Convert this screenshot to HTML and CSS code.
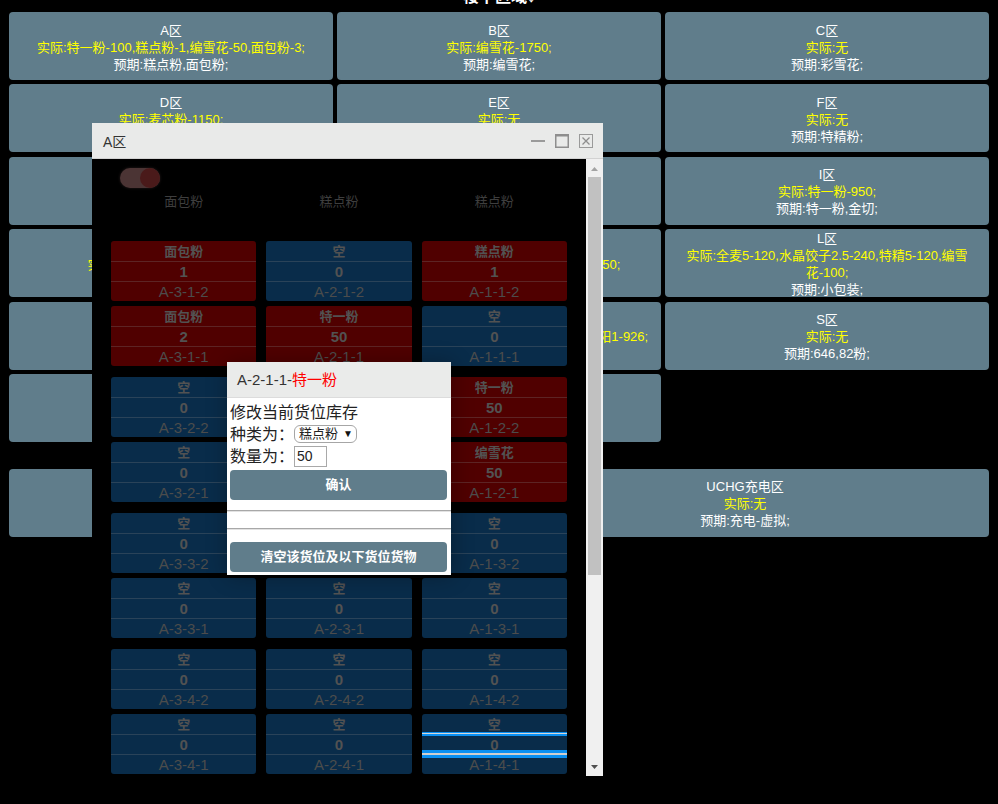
FILE: index.html
```html
<!DOCTYPE html>
<html lang="zh">
<head>
<meta charset="utf-8">
<title>楼下区域</title>
<link rel="stylesheet" href="styles.css">
</head>
<body>
<div class="page">
  <div class="sec-title">楼下区域↓</div>
  <div class="zones">
    <div class="zone"><div>A区</div><div class="act">实际:特一粉-100,糕点粉-1,编雪花-50,面包粉-3;</div><div>预期:糕点粉,面包粉;</div></div>
    <div class="zone"><div>B区</div><div class="act">实际:编雪花-1750;</div><div>预期:编雪花;</div></div>
    <div class="zone"><div>C区</div><div class="act">实际:无</div><div>预期:彩雪花;</div></div>
    <div class="zone"><div>D区</div><div class="act">实际:麦芯粉-1150;</div><div>预期:麦芯粉;</div></div>
    <div class="zone"><div>E区</div><div class="act">实际:无</div><div>预期:雪花粉;</div></div>
    <div class="zone"><div>F区</div><div class="act">实际:无</div><div>预期:特精粉;</div></div>
    <div class="zone"><div>G区</div><div class="act">实际:无</div><div>预期:麦芯粉;</div></div>
    <div class="zone"><div>H区</div><div class="act">实际:无</div><div>预期:特一粉;</div></div>
    <div class="zone"><div>I区</div><div class="act">实际:特一粉-950;</div><div>预期:特一粉,金切;</div></div>
    <div class="zone"><div>J区</div><div class="act">实际:特精粉-1000,麦芯粉-50;</div><div>预期:特精粉;</div></div>
    <div class="zone"><div>K区</div><div class="act">实际:特精粉-1200,麦芯粉-800,特一粉-350;</div><div>预期:特精粉,麦芯粉;</div></div>
    <div class="zone"><div>L区</div><div class="act">实际:全麦5-120,水晶饺子2.5-240,特精5-120,编雪花-100;</div><div>预期:小包装;</div></div>
    <div class="zone"><div>M区</div><div class="act">实际:无</div><div>预期:面包粉;</div></div>
    <div class="zone"><div>N区</div><div class="act">实际:特一粉-1200,雪花粉-300,麦芯粉-50,朝阳1-926;</div><div>预期:朝阳;</div></div>
    <div class="zone"><div>S区</div><div class="act">实际:无</div><div>预期:646,82粉;</div></div>
    <div class="zone"><div>T区</div><div class="act">实际:无</div><div>预期:糕点粉;</div></div>
    <div class="zone"><div>U区</div><div class="act">实际:无</div><div>预期:编雪花;</div></div>
  </div>
  <div class="sec-title sec2">充电区域↓</div>
  <div class="zones two">
    <div class="zone"><div>充电区</div><div class="act">实际:无</div><div>预期:充电;</div></div>
    <div class="zone"><div>UCHG充电区</div><div class="act">实际:无</div><div>预期:充电-虚拟;</div></div>
  </div>
</div>

<div class="win">
  <div class="win-bar">
    <span class="win-title">A区</span>
    <div class="win-ctrls">
      <svg width="14" height="14" viewBox="0 0 14 14"><rect x="0" y="6" width="14" height="2" fill="#9a9a9a"/></svg>
      <svg width="14" height="14" viewBox="0 0 14 14"><rect x="0.75" y="0.75" width="12.5" height="12.5" fill="none" stroke="#8e8e8e" stroke-width="1.5"/><rect x="0" y="0" width="14" height="2.5" fill="#8e8e8e"/></svg>
      <svg width="14" height="14" viewBox="0 0 14 14"><rect x="0.5" y="0.5" width="13" height="13" fill="none" stroke="#9a9a9a"/><path d="M3.5 3.5 L10.5 10.5 M10.5 3.5 L3.5 10.5" stroke="#8e8e8e" stroke-width="1.3"/></svg>
    </div>
  </div>
  <div class="win-main">
    <div class="win-body">
      <div class="toggle"><span class="knob"></span></div>
      <div class="heads"><span>面包粉</span><span>糕点粉</span><span>糕点粉</span></div>

      <div class="grp">
        <div class="cell red"><div class="nm">面包粉</div><div class="ct">1</div><div class="loc">A-3-1-2</div></div>
        <div class="cell blue"><div class="nm">空</div><div class="ct">0</div><div class="loc">A-2-1-2</div></div>
        <div class="cell red"><div class="nm">糕点粉</div><div class="ct">1</div><div class="loc">A-1-1-2</div></div>
        <div class="cell red"><div class="nm">面包粉</div><div class="ct">2</div><div class="loc">A-3-1-1</div></div>
        <div class="cell red"><div class="nm">特一粉</div><div class="ct">50</div><div class="loc">A-2-1-1</div></div>
        <div class="cell blue"><div class="nm">空</div><div class="ct">0</div><div class="loc">A-1-1-1</div></div>
      </div>
      <div class="grp">
        <div class="cell blue"><div class="nm">空</div><div class="ct">0</div><div class="loc">A-3-2-2</div></div>
        <div class="cell blue"><div class="nm">空</div><div class="ct">0</div><div class="loc">A-2-2-2</div></div>
        <div class="cell red"><div class="nm">特一粉</div><div class="ct">50</div><div class="loc">A-1-2-2</div></div>
        <div class="cell blue"><div class="nm">空</div><div class="ct">0</div><div class="loc">A-3-2-1</div></div>
        <div class="cell blue"><div class="nm">空</div><div class="ct">0</div><div class="loc">A-2-2-1</div></div>
        <div class="cell red"><div class="nm">编雪花</div><div class="ct">50</div><div class="loc">A-1-2-1</div></div>
      </div>
      <div class="grp">
        <div class="cell blue"><div class="nm">空</div><div class="ct">0</div><div class="loc">A-3-3-2</div></div>
        <div class="cell blue"><div class="nm">空</div><div class="ct">0</div><div class="loc">A-2-3-2</div></div>
        <div class="cell blue"><div class="nm">空</div><div class="ct">0</div><div class="loc">A-1-3-2</div></div>
        <div class="cell blue"><div class="nm">空</div><div class="ct">0</div><div class="loc">A-3-3-1</div></div>
        <div class="cell blue"><div class="nm">空</div><div class="ct">0</div><div class="loc">A-2-3-1</div></div>
        <div class="cell blue"><div class="nm">空</div><div class="ct">0</div><div class="loc">A-1-3-1</div></div>
      </div>
      <div class="grp">
        <div class="cell blue"><div class="nm">空</div><div class="ct">0</div><div class="loc">A-3-4-2</div></div>
        <div class="cell blue"><div class="nm">空</div><div class="ct">0</div><div class="loc">A-2-4-2</div></div>
        <div class="cell blue"><div class="nm">空</div><div class="ct">0</div><div class="loc">A-1-4-2</div></div>
        <div class="cell blue"><div class="nm">空</div><div class="ct">0</div><div class="loc">A-3-4-1</div></div>
        <div class="cell blue"><div class="nm">空</div><div class="ct">0</div><div class="loc">A-2-4-1</div></div>
        <div class="cell blue selected"><div class="nm">空</div><div class="ct">0</div><div class="loc">A-1-4-1</div><span class="hl hl1"></span><span class="hl hl2"></span></div>
      </div>
    </div>
    <div class="sbar">
      <svg class="arr" width="17" height="18" viewBox="0 0 17 18"><path d="M5 12 L8.5 8 L12 12 Z" fill="#a3a3a3"/></svg>
      <div class="thumb"></div>
      <div class="track"></div>
      <svg class="arr" width="17" height="17" viewBox="0 0 17 17"><path d="M5 6 L12 6 L8.5 10 Z" fill="#505050"/></svg>
    </div>
  </div>

  <div class="dlg">
    <div class="dlg-title">A-2-1-1-<span class="red-t">特一粉</span></div>
    <div class="dlg-body">
      <div class="ln">修改当前货位库存</div>
      <div class="ln">种类为：<span class="select">糕点粉<span class="caret">▼</span></span></div>
      <div class="ln">数量为：<span class="inp">50</span></div>
      <div class="btn">确认</div>
      <div class="rule r1"></div>
      <div class="rule r2"></div>
      <div class="btn">清空该货位及以下货位货物</div>
    </div>
  </div>
</div>
</body>
</html>
```

FILE: styles.css
```css
html, body {
  margin: 0;
  background: #000;
  overflow: hidden;
}
body {
  font-family: "Liberation Sans", "Noto Sans CJK SC", sans-serif;
  height: 804px;
}
.page {
  padding: 0 9px;
}
.sec-title {
  height: 20px;
  line-height: 20px;
  margin-top: -13px;
  margin-bottom: 5px;
  text-align: center;
  color: #fff;
  font-size: 16px;
  font-weight: bold;
}
.sec-title.sec2 {
  margin-top: 4px;
  margin-bottom: 3px;
}
.zones {
  display: grid;
  grid-template-columns: repeat(3, 1fr);
  column-gap: 4px;
  row-gap: 4.4px;
}
.zones.two {
  grid-template-columns: 1fr 1fr;
}
.zone {
  height: 68px;
  box-sizing: border-box;
  padding: 2px 8px 0;
  background: #607d8b;
  border-radius: 4px;
  display: flex;
  flex-direction: column;
  justify-content: center;
  align-items: center;
  text-align: center;
  font-size: 13px;
  line-height: 17px;
  color: #fff;
}
.zone .act {
  color: #ffff00;
}

/* window */
.win {
  position: absolute;
  left: 92px;
  top: 123px;
  width: 511px;
  height: 653px;
  background: #000;
}
.win-bar {
  height: 35px;
  background: #e9eae9;
  border-bottom: 1px solid #d2d2d2;
  display: flex;
  align-items: center;
  padding: 0 10px 0 11px;
  color: #333;
  font-size: 14px;
}
.win-title {
  flex: 1;
}
.win-ctrls {
  display: flex;
  gap: 10px;
  align-items: center;
}
.win-ctrls svg {
  display: block;
}
.win-main {
  display: flex;
  height: 617px;
}
.win-body {
  flex: 1;
  overflow: hidden;
  padding: 9px 19px 0;
}
.toggle {
  width: 40px;
  height: 20px;
  margin-left: 9px;
  border-radius: 10px;
  background: #4b3434;
  display: flex;
  justify-content: flex-end;
  box-shadow: 0 0 3px rgba(70, 50, 50, 0.6);
}
.knob {
  width: 20px;
  height: 20px;
  border-radius: 50%;
  background: #4a1a1a;
}
.heads {
  display: grid;
  grid-template-columns: repeat(3, 1fr);
  column-gap: 10px;
  margin-top: 4px;
  margin-bottom: 29px;
  height: 20px;
  line-height: 20px;
  text-align: center;
  font-size: 13px;
  color: #3e3e3e;
}
.grp {
  display: grid;
  grid-template-columns: repeat(3, 1fr);
  column-gap: 10px;
  row-gap: 5px;
  margin-bottom: 11px;
}
.cell {
  position: relative;
  height: 60px;
  border-radius: 3px;
  display: flex;
  flex-direction: column;
  text-align: center;
  color: #525252;
  overflow: hidden;
}
.cell.red {
  background: #500000;
}
.cell.blue {
  background: #092c4a;
}
.cell .nm {
  height: 20px;
  line-height: 22px;
  font-size: 13px;
  font-weight: bold;
  border-bottom: 1px solid rgba(128, 128, 128, 0.28);
}
.cell .ct {
  height: 19px;
  line-height: 19px;
  font-size: 15px;
  font-weight: bold;
  border-bottom: 1px solid rgba(128, 128, 128, 0.28);
}
.cell .loc {
  flex: 1;
  line-height: 19px;
  font-size: 15px;
  color: #4c4c4c;
}
.hl {
  position: absolute;
  left: 0;
  right: 0;
}
.hl1 {
  top: 18px;
  height: 4px;
  background: linear-gradient(#0a90f2 0 1.5px, #d6d6d6 1.5px 2.5px, #0a90f2 2.5px);
}
.hl2 {
  top: 36px;
  height: 8px;
  background: linear-gradient(#0a90f2 0 3px, #cfcfcf 3px 5px, #0a90f2 5px);
}

/* scrollbar */
.sbar {
  width: 17px;
  background: #f0f0f0;
  display: flex;
  flex-direction: column;
  align-items: center;
}
.sbar .arr {
  display: block;
  flex: none;
}
.thumb {
  width: 13px;
  height: 398px;
  background: #c1c1c1;
  flex: none;
}
.track {
  flex: 1;
}

/* dialog */
.dlg {
  position: absolute;
  left: 135px;
  top: 239px;
  width: 224px;
  height: 213px;
  background: #fff;
  box-shadow: 1px 1px 20px rgba(0, 0, 0, 0.3);
}
.dlg-title {
  height: 35px;
  line-height: 35px;
  background: #eaebea;
  border-bottom: 1px solid #dcdcdc;
  padding-left: 10px;
  font-size: 15px;
  color: #333;
}
.red-t {
  color: #ff0000;
}
.dlg-body {
  padding-top: 4px;
  color: #222;
  font-size: 16px;
}
.ln {
  padding-left: 3px;
  height: 21px;
  line-height: 21px;
  display: flex;
  align-items: center;
}
.ln + .ln {
  height: 22px;
}
.select {
  display: inline-flex;
  align-items: center;
  box-sizing: border-box;
  height: 18px;
  width: 63px;
  border: 1px solid #a6a6a6;
  border-radius: 6px;
  padding: 0 0 0 4px;
  font-size: 13px;
  line-height: 16px;
  color: #222;
}
.caret {
  font-size: 10px;
  margin-left: 5px;
  color: #111;
}
.inp {
  display: inline-block;
  box-sizing: border-box;
  width: 33px;
  height: 21px;
  border: 1px solid #a9a9a9;
  font-size: 14px;
  line-height: 19px;
  padding-left: 2px;
}
.btn {
  margin: 3px 4px 0 3px;
  height: 30px;
  line-height: 30px;
  border-radius: 4px;
  background: #607d8b;
  color: #fff;
  font-size: 13px;
  font-weight: bold;
  text-align: center;
}
.rule {
  border-top: 1px solid #a8a8a8;
  border-bottom: 1px solid #e2e2e2;
}
.rule.r1 {
  margin-top: 10px;
}
.rule.r2 {
  margin-top: 16px;
}
.rule + .btn {
  margin-top: 12px;
}
```
